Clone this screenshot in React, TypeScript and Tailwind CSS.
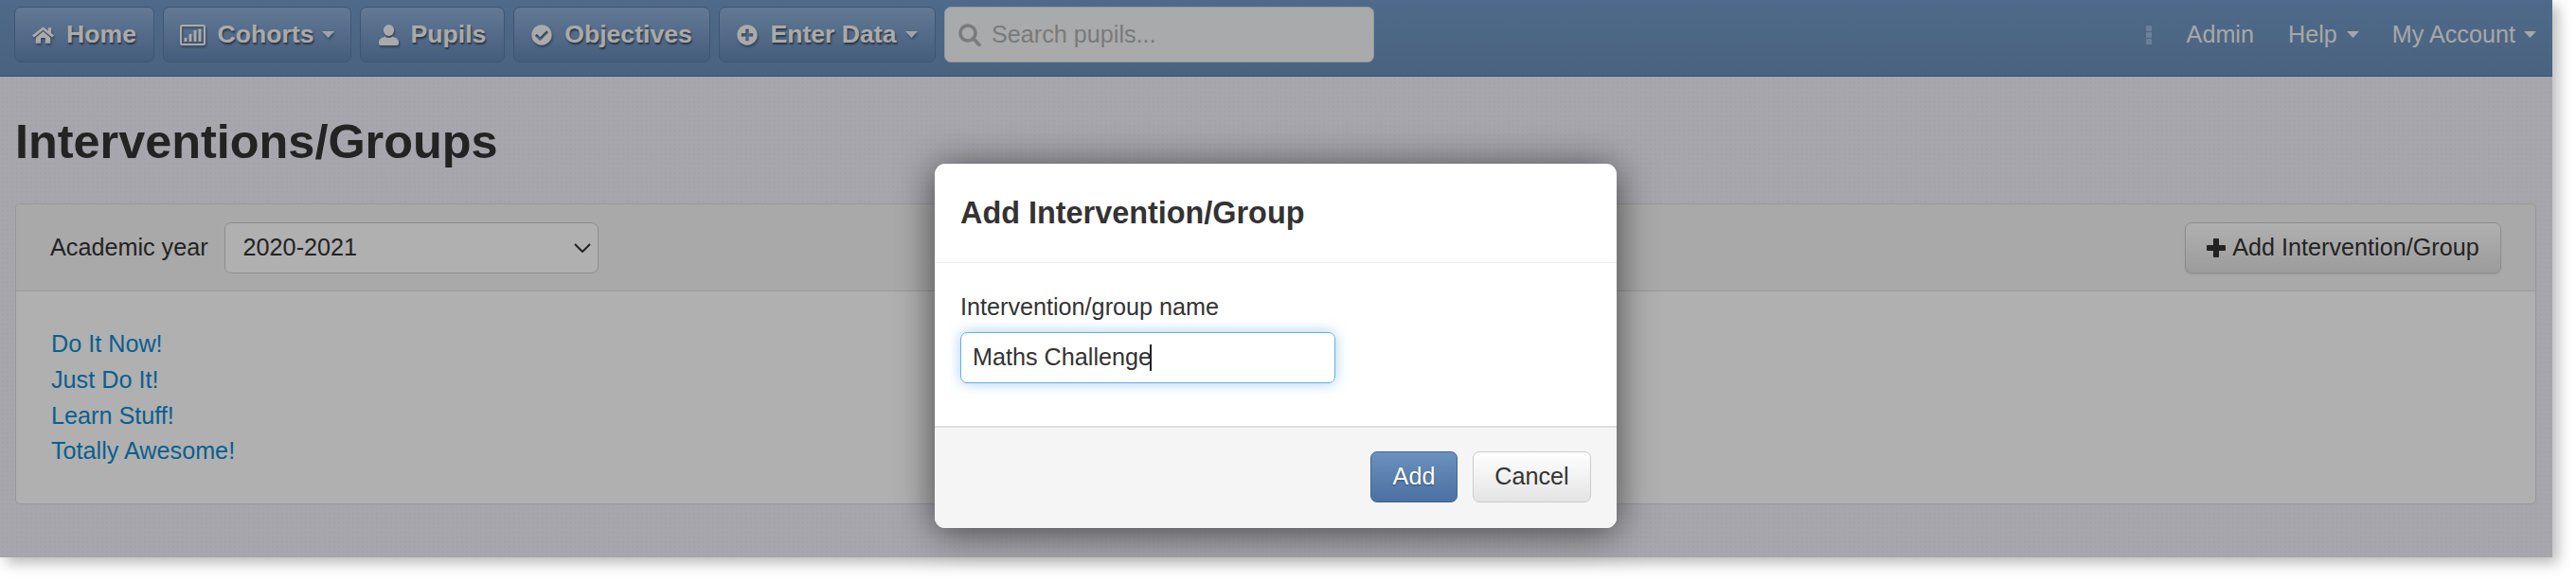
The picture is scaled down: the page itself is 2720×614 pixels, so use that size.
import type { ReactNode } from "react";
import { FaCheckCircle, FaPlusCircle } from "react-icons/fa";

const Caret = ({ className = "" }: { className?: string }) => (
  <svg viewBox="0 0 13 7" className={`h-[7px] w-[13px] shrink-0 fill-current ${className}`}>
    <path d="M0 0h13L6.5 7z" />
  </svg>
);

const HomeIcon = () => (
  <svg viewBox="0 0 24 18" className="h-[18px] w-[23px] shrink-0 fill-current">
    <path d="M12 0l5.5 4.3V1H21v6l3 2.5-2 2-10-8-10 8-2-2z" />
    <path d="M4 11.8L12 5.2l8 6.6V18h-5.5v-6h-5v6H4z" />
  </svg>
);

const StatsIcon = () => (
  <svg viewBox="0 0 27 22" className="h-[22px] w-[27px] shrink-0">
    <rect x="1" y="1" width="25" height="20" rx="1.5" fill="none" stroke="currentColor" strokeWidth="2" />
    <path d="M4.5 14h3v4h-3zM9.5 10h3v8h-3zM14.5 6h3v12h-3zM19.5 4.5h3V18h-3z" fill="currentColor" />
  </svg>
);

const UserIcon = () => (
  <svg viewBox="0 0 21 22" className="h-[22px] w-[21px] shrink-0 fill-current">
    <ellipse cx="10.5" cy="6" rx="5.6" ry="6" />
    <path d="M0 18.5C0 14.5 4 13.8 6.6 12.4 8.6 14.4 12.4 14.4 14.4 12.4 17 13.8 21 14.5 21 18.5V20a2 2 0 0 1-2 2H2a2 2 0 0 1-2-2z" />
  </svg>
);

const SearchIcon = () => (
  <svg viewBox="0 0 24 24" className="h-[24px] w-[24px] shrink-0 fill-none stroke-[#b3b3b3] stroke-[3.6]">
    <circle cx="10" cy="10" r="8" />
    <path d="M15.5 15.5L22 22.5" strokeLinecap="round" />
  </svg>
);

const PlusIcon = () => (
  <svg viewBox="0 0 20 20" className="h-[20px] w-[20px] shrink-0 fill-current">
    <path d="M7 1a1 1 0 0 1 1-1h4a1 1 0 0 1 1 1v6h6a1 1 0 0 1 1 1v4a1 1 0 0 1-1 1h-6v6a1 1 0 0 1-1 1H8a1 1 0 0 1-1-1v-6H1a1 1 0 0 1-1-1V8a1 1 0 0 1 1-1h6z" />
  </svg>
);

const NavButton = ({ icon, label, caret, className = "" }: { icon: ReactNode; label: string; caret?: boolean; className?: string }) => (
  <button
    className={`flex h-[59px] items-center justify-center gap-[13px] rounded-[7px] border border-[#5b7da8] bg-gradient-to-b from-[#8fb0d8] to-[#6488b5] text-[26.6px] font-bold text-[#f6f6f6] [text-shadow:1px_2px_2px_rgba(0,0,0,0.5)] [&_svg]:drop-shadow-[1px_2px_1px_rgba(0,0,0,0.35)] ${className}`}
  >
    {icon}
    <span>{label}</span>
    {caret && <Caret className="-ml-[4px] opacity-90" />}
  </button>
);

const links = ["Do It Now!", "Just Do It!", "Learn Stuff!", "Totally Awesome!"];

export default function App() {
  return (
    <div className="h-[614px] w-[2720px] overflow-hidden bg-white font-['Liberation_Sans',Arial,sans-serif] text-[25.2px] leading-[37.8px] text-[#333]">
      <div className="relative h-[589px] w-[2695px] bg-[#f2f1f9] bg-[radial-gradient(rgba(0,0,0,0.025)_1px,transparent_1px)] bg-[length:5px_5px] shadow-[6px_6px_14px_rgba(0,0,0,0.28)]">
        <nav className="flex h-[81px] items-start justify-between border-b border-[#55749b] bg-gradient-to-b from-[#739ac8] to-[#6a8fb9] pl-[15px] pr-[17px] pt-[7px]">
          <div className="flex items-center gap-[9px]">
            <NavButton className="w-[148px]" icon={<HomeIcon />} label="Home" />
            <NavButton className="w-[199px]" icon={<StatsIcon />} label="Cohorts" caret />
            <NavButton className="w-[153px]" icon={<UserIcon />} label="Pupils" />
            <NavButton className="w-[208px]" icon={<FaCheckCircle className="h-[22px] w-[22px] shrink-0" />} label="Objectives" />
            <NavButton className="w-[229px]" icon={<FaPlusCircle className="h-[22px] w-[22px] shrink-0" />} label="Enter Data" caret />
            <div className="flex h-[59px] w-[454px] items-center gap-[11px] rounded-[7px] border border-[#d9dbe0] bg-[#f5f6f8] pl-[14px]">
              <SearchIcon />
              <input
                placeholder="Search pupils..."
                className="w-full bg-transparent text-[25.2px] text-[#333] outline-none placeholder:text-[#b1b1b1]"
              />
            </div>
          </div>
          <div className="flex h-[59px] items-center text-[25.2px] text-[#f2f2f2]">
            <div className="mr-[37px] flex flex-col gap-[1px]">
              <span className="h-[6px] w-[6px] rounded-[1px] bg-[#9bb8e0]" />
              <span className="h-[6px] w-[6px] rounded-[1px] bg-[#9bb8e0]" />
              <span className="h-[6px] w-[6px] rounded-[1px] bg-[#9bb8e0]" />
            </div>
            <a>Admin</a>
            <a className="ml-[36px] flex items-center gap-[10px]">
              Help <Caret />
            </a>
            <a className="ml-[35px] flex items-center gap-[9px]">
              My Account <Caret />
            </a>
          </div>
        </nav>

        <main className="px-[16px]">
          <div className="flex h-[134px] items-center pt-[2px]">
            <h1 className="text-[50.4px] font-bold leading-[55px] text-[#333]">Interventions/Groups</h1>
          </div>
          <section className="w-[2662px] rounded-[5px] border border-[#ddd] bg-white">
            <div className="flex h-[92px] items-center justify-between rounded-t-[5px] border-b border-[#ddd] bg-[#f5f5f5] pl-[36px] pr-[36px]">
              <div className="flex items-center gap-[17px]">
                <label>Academic year</label>
                <div className="relative">
                  <select
                    defaultValue="2020-2021"
                    className="h-[54px] w-[395px] appearance-none rounded-[7px] border border-[#ccc] bg-white pl-[19px] text-[#333] outline-none"
                  >
                    <option>2020-2021</option>
                  </select>
                  <svg viewBox="0 0 18 10" className="absolute right-[8px] top-[22px] h-[10px] w-[18px] fill-none stroke-[#333] stroke-2">
                    <path d="M1 1l8 8 8-8" />
                  </svg>
                </div>
              </div>
              <button className="flex h-[54px] w-[334px] items-center justify-center gap-[7px] rounded-[7px] border border-[#ccc] bg-gradient-to-b from-white to-[#e2e2e2] text-[#333] shadow-[0_1px_2px_rgba(0,0,0,0.1)]">
                <PlusIcon />
                Add Intervention/Group
              </button>
            </div>
            <div className="flex flex-col items-start pb-[36px] pl-[37px] pt-[37px]">
              {links.map((link) => (
                <a key={link} href="#" className="text-[#0d8bd0]">
                  {link}
                </a>
              ))}
            </div>
          </section>
        </main>

        <div className="absolute inset-0 bg-black/[0.31]" />

        <div className="absolute left-[987px] top-[173px] flex h-[385px] w-[720px] flex-col overflow-hidden rounded-[11px] bg-white shadow-[0_4px_40px_rgba(0,0,0,0.6)]">
          <div className="flex h-[105px] shrink-0 items-center border-b border-[#eee] px-[27px]">
            <h4 className="text-[32.4px] font-bold leading-[36px] text-[#333]">Add Intervention/Group</h4>
          </div>
          <div className="flex-1 px-[27px] pt-[28px]">
            <label className="mb-[7px] block">Intervention/group name</label>
            <div className="relative w-[396px]">
              <input
                defaultValue="Maths Challenge"
                className="h-[54px] w-full rounded-[7px] border border-[#66afe9] px-[12px] text-[#333] shadow-[0_0_14px_rgba(102,175,233,0.6)] outline-none"
              />
              <span className="absolute left-[200px] top-[13px] h-[28px] w-[2px] bg-[#222]" />
            </div>
          </div>
          <div className="flex h-[108px] shrink-0 items-start justify-end gap-[16px] border-t-2 border-[#e0e0e0] bg-[#f5f5f5] pr-[27px] pt-[25px]">
            <button className="h-[54px] w-[92px] rounded-[7px] border border-[#3f6797] bg-gradient-to-b from-[#6b91be] to-[#4a71a2] text-white [text-shadow:0_1px_2px_rgba(0,0,0,0.4)]">
              Add
            </button>
            <button className="h-[54px] w-[125px] rounded-[7px] border border-[#ccc] bg-gradient-to-b from-white to-[#e4e4e4] text-[#333]">
              Cancel
            </button>
          </div>
        </div>
      </div>
    </div>
  );
}
